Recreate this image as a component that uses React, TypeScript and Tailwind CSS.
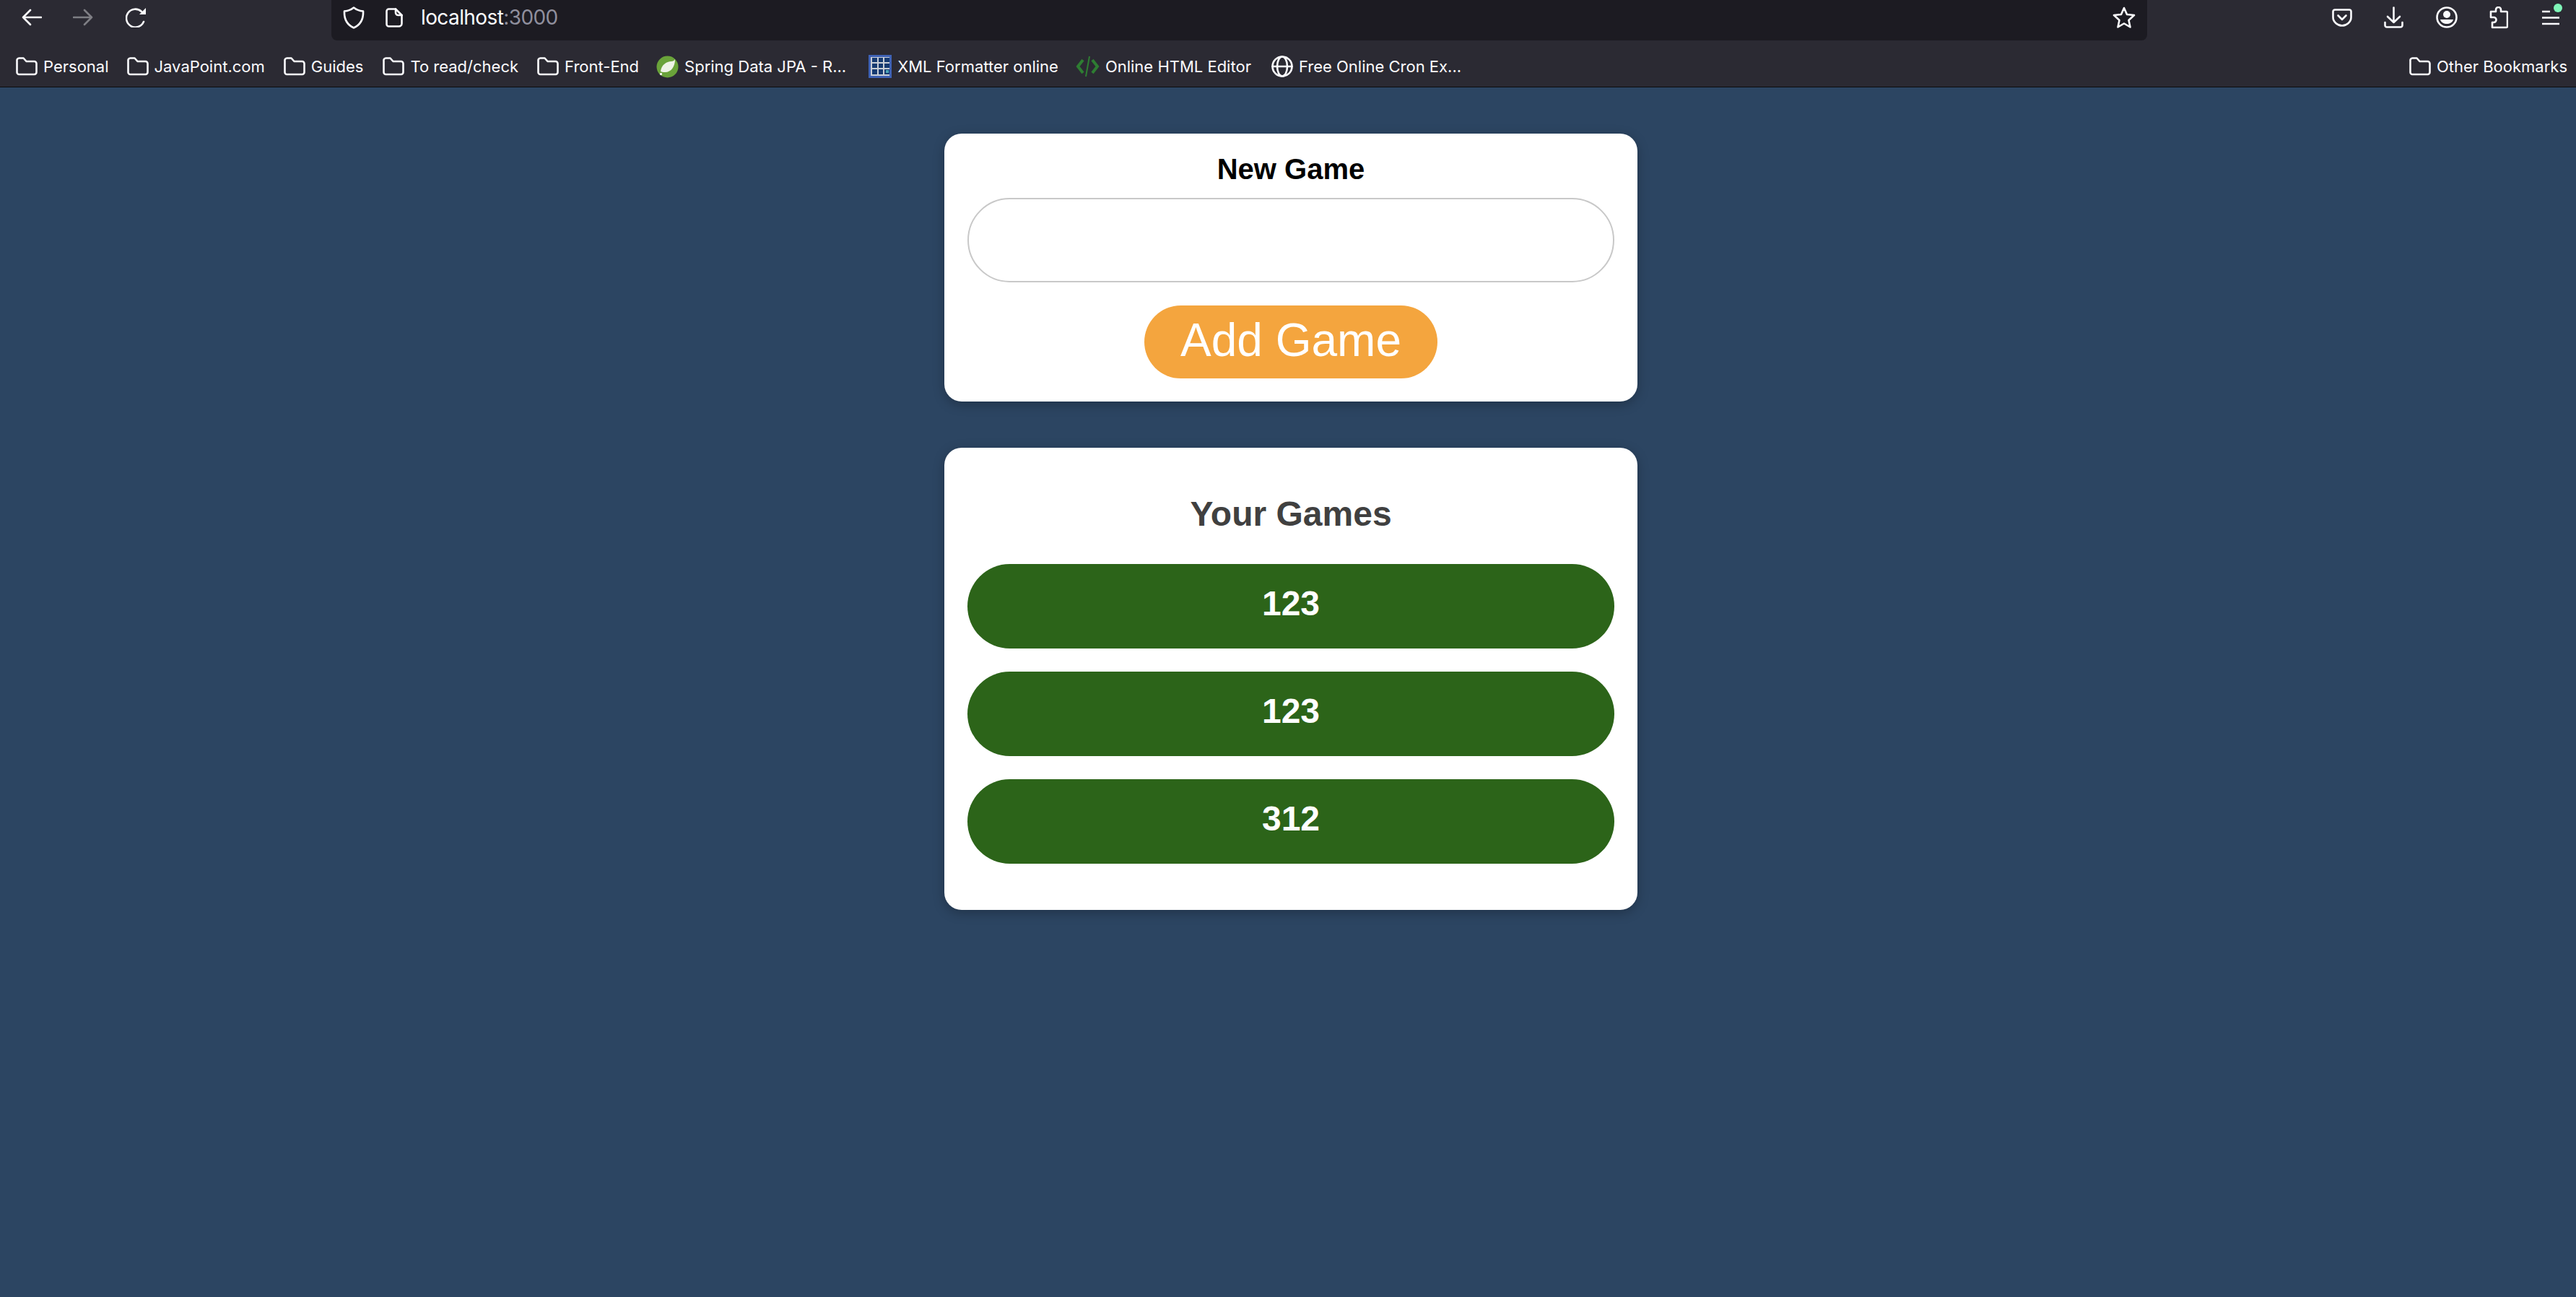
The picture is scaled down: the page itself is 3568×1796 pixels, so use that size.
import type { ReactNode } from 'react'

const stroke = {
  fill: 'none',
  stroke: 'currentColor',
  strokeWidth: 2.6,
  strokeLinecap: 'round' as const,
  strokeLinejoin: 'round' as const,
}

function Folder() {
  return (
    <svg width="30" height="26" viewBox="0 0 30 26" className="shrink-0 text-[#fbfbfe]" {...stroke}>
      <path d="M1.5 5a3 3 0 0 1 3-3.5h6l4 4.5h11a3 3 0 0 1 3 3v12a3 3 0 0 1-3 3h-21a3 3 0 0 1-3-3z" />
    </svg>
  )
}

function Spring() {
  return (
    <svg width="31" height="31" viewBox="0 0 31 31" className="shrink-0">
      <circle cx="15.5" cy="15.5" r="15" fill="#6aa33a" />
      <path d="M26 5c0 10-5 18-14 18-3 0-5-.5-6-1 1-9 8-14 15-14 2 0 4-1 5-3z" fill="#eef3e6" />
      <rect x="5" y="24" width="3" height="3" fill="#eef3e6" />
    </svg>
  )
}

function XmlGrid() {
  return (
    <svg width="32" height="32" viewBox="0 0 32 32" className="shrink-0">
      <rect width="32" height="32" fill="#3f62b5" />
      <rect x="3" y="3" width="26" height="26" fill="#c9ced6" />
      <g fill="#163a70">
        <rect x="5" y="4" width="7" height="6" />
        <rect x="14" y="4" width="6" height="6" />
        <rect x="22" y="4" width="7" height="6" />
        <rect x="5" y="12" width="7" height="6" />
        <rect x="14" y="12" width="6" height="6" />
        <rect x="22" y="12" width="7" height="6" />
        <rect x="5" y="20" width="7" height="7" />
        <rect x="14" y="20" width="6" height="7" />
        <rect x="22" y="20" width="7" height="7" />
      </g>
      <rect x="24" y="21" width="4" height="4" fill="#4aa3b5" />
    </svg>
  )
}

function CodeMark() {
  return (
    <svg width="33" height="32" viewBox="0 0 33 32" className="shrink-0" fill="none" stroke="#2e7d32" strokeWidth="4">
      <path d="M10 7l-7 9 7 9" />
      <path d="M23 7l7 9-7 9" />
      <path d="M19 2l-5 28" strokeWidth="2" />
    </svg>
  )
}

function Globe() {
  return (
    <svg width="30" height="30" viewBox="0 0 30 30" className="shrink-0 text-[#fbfbfe]" {...stroke}>
      <circle cx="15" cy="15" r="13.5" />
      <ellipse cx="15" cy="15" rx="7" ry="13.5" />
      <path d="M1.5 15h27" />
    </svg>
  )
}

function Bookmark({ icon, label, className }: { icon: ReactNode; label: string; className: string }) {
  return (
    <div className={`flex items-center gap-2 ${className}`}>
      {icon}
      <span className="whitespace-nowrap text-[#fbfbfe]">{label}</span>
    </div>
  )
}

function Toolbar() {
  return (
    <div className="h-[121px] bg-[#2b2a33] border-b border-[#0c0c0d] font-['Inter',sans-serif] shrink-0">
      <div className="flex h-14 text-[#fbfbfe]">
        <div className="flex w-[459px] items-center pb-2 pl-[30px]">
          <svg width="28" height="24" viewBox="0 0 28 24" {...stroke}>
            <path d="M27 12H2M12 2L2 12l10 10" />
          </svg>
          <svg width="28" height="24" viewBox="0 0 28 24" className="ml-[43px] opacity-40" {...stroke}>
            <path d="M1 12h25M16 2l10 10-10 10" />
          </svg>
          <svg width="30" height="28" viewBox="0 0 30 28" className="ml-[45px]" fill="none">
            <path d="M25 20a12.500 12.500 0 1 1-3-14" stroke="currentColor" strokeWidth="2.600" strokeLinecap="round" />
            <path d="M19 10L28 1v9z" fill="currentColor" />
          </svg>
        </div>
        <div className="flex w-[2515px] items-center rounded-b-lg bg-[#1c1b22] pb-2 pl-4 pr-4">
          <svg width="30" height="31" viewBox="0 0 30 31" className="shrink-0" {...stroke}>
            <path d="M15 1.500c3 2.500 8 4.500 13 5 .5 10-3 18.500-13 23-10-4.500-13.500-13-13-23 5-.5 10-2.500 13-5z" />
          </svg>
          <svg width="24" height="27" viewBox="0 0 24 27" className="ml-[29px] shrink-0" {...stroke}>
            <path d="M4.500 1.500H14l8.500 8.500v11.500a4 4 0 0 1-4 4h-14a3 3 0 0 1-3-3V4.500a3 3 0 0 1 3-3z" />
            <path d="M14 1.500v5a3.500 3.500 0 0 0 3.500 3.500h5" />
          </svg>
          <span className="ml-[25px] text-[28px] tracking-[-0.6px] text-[#fbfbfe]">
            localhost<span className="text-[#8f8f9d]">:3000</span>
          </span>
          <svg width="32" height="30" viewBox="0 0 32 30" className="ml-auto shrink-0" {...stroke}>
            <path d="M16 2l4 9 10 1-7.500 7 2 9.500L16 23.500 7.500 28.500l2-9.500L2 12l10-1z" />
          </svg>
        </div>
        <div className="flex flex-1 items-center pb-2 pl-[256px]">
          <svg width="28" height="25" viewBox="0 0 28 25" className="shrink-0" {...stroke}>
            <path d="M4 1.500h20a2.500 2.500 0 0 1 2.500 2.500v8c0 6.500-6.500 11.500-12.500 11.500S1.500 18.500 1.500 12V4A2.500 2.500 0 0 1 4 1.500z" />
            <path d="M8.500 9.500L14 15l5.500-5.500" />
          </svg>
          <svg width="27" height="30" viewBox="0 0 27 30" className="ml-[44px] shrink-0" {...stroke}>
            <path d="M13.500 1.500v20M5 14l8.500 8 8.500-8M1.500 22v4a2.500 2.500 0 0 0 2.500 2.500h19a2.500 2.500 0 0 0 2.500-2.500v-4" />
          </svg>
          <svg width="30" height="30" viewBox="0 0 30 30" className="ml-[45px] shrink-0">
            <circle cx="15" cy="15" r="13.500" fill="none" stroke="currentColor" strokeWidth="2.600" />
            <circle cx="15" cy="11" r="5" fill="currentColor" />
            <path d="M6 18h18c-1 4-5 6-9 6s-8-2-9-6z" fill="currentColor" />
          </svg>
          <svg width="26" height="31" viewBox="0 0 26 31" className="ml-[44px] shrink-0" {...stroke}>
            <path d="M9 7V4.500a3.500 3.500 0 0 1 7 0V7h7.500a1.500 1.500 0 0 1 1.500 1.500v19a1.500 1.500 0 0 1-1.500 1.500H4V22h2a3.500 3.500 0 0 0 0-7H2V7z" />
          </svg>
          <div className="relative ml-[47px] h-[21px] w-6 shrink-0">
            <svg width="24" height="21" viewBox="0 0 24 21" className="block" fill="none" stroke="currentColor" strokeWidth="2.600">
              <path d="M0 2h11M0 10.500h24M0 19h24" />
            </svg>
            <div className="absolute right-[-4px] top-[-9px] h-3 w-3 rounded-full bg-[#7ff5b8]" />
          </div>
        </div>
      </div>
      <div className="flex h-[64px] items-center pl-[22px] pr-3 pt-2 text-[22px]">
        <Bookmark icon={<Folder />} label="Personal" className="mr-[25px]" />
        <Bookmark icon={<Folder />} label="JavaPoint.com" className="mr-[26px]" />
        <Bookmark icon={<Folder />} label="Guides" className="mr-[27px]" />
        <Bookmark icon={<Folder />} label="To read/check" className="mr-[26px]" />
        <Bookmark icon={<Folder />} label="Front-End" className="mr-6" />
        <Bookmark icon={<Spring />} label="Spring Data JPA - R..." className="mr-[31px]" />
        <Bookmark icon={<XmlGrid />} label="XML Formatter online" className="mr-6" />
        <Bookmark icon={<CodeMark />} label="Online HTML Editor" className="mr-7" />
        <Bookmark icon={<Globe />} label="Free Online Cron Ex..." className="" />
        <Bookmark icon={<Folder />} label="Other Bookmarks" className="ml-auto" />
      </div>
    </div>
  )
}

const games = ['123', '123', '312']

export default function App() {
  return (
    <div className="flex h-[1796px] flex-col overflow-hidden bg-[#2c4562] font-['Liberation_Sans',Arial,sans-serif]">
      <Toolbar />
      <main className="flex flex-col items-center pl-2 pt-16">
        <div className="flex h-[371px] w-[960px] flex-col items-center rounded-3xl bg-white px-8 pt-[26px] shadow-[0_4px_16px_rgba(0,0,0,0.26)]">
          <h2 className="text-[40px] leading-[46px] font-bold text-black">New Game</h2>
          <input
            type="text"
            className="mt-[17px] h-[117px] w-full rounded-full border-2 border-[#c8c8c8] bg-white"
          />
          <button className="mt-8 h-[101px] rounded-full bg-[#f4a53e] px-[50px] pb-3 text-[64px] text-white">
            Add Game
          </button>
        </div>

        <div className="mt-16 flex h-[640px] w-[960px] flex-col items-center rounded-3xl bg-white px-8 pt-16 shadow-[0_4px_16px_rgba(0,0,0,0.26)]">
          <h2 className="text-[48px] leading-[56px] font-bold text-[#404040]">Your Games</h2>
          <div className="mt-[41px] flex w-full flex-col gap-8">
            {games.map((game, index) => (
              <div
                key={index}
                className="flex h-[117px] items-center justify-center rounded-full bg-[#2c6419] pb-2 text-[48px] font-bold text-white"
              >
                {game}
              </div>
            ))}
          </div>
        </div>
      </main>
    </div>
  )
}
